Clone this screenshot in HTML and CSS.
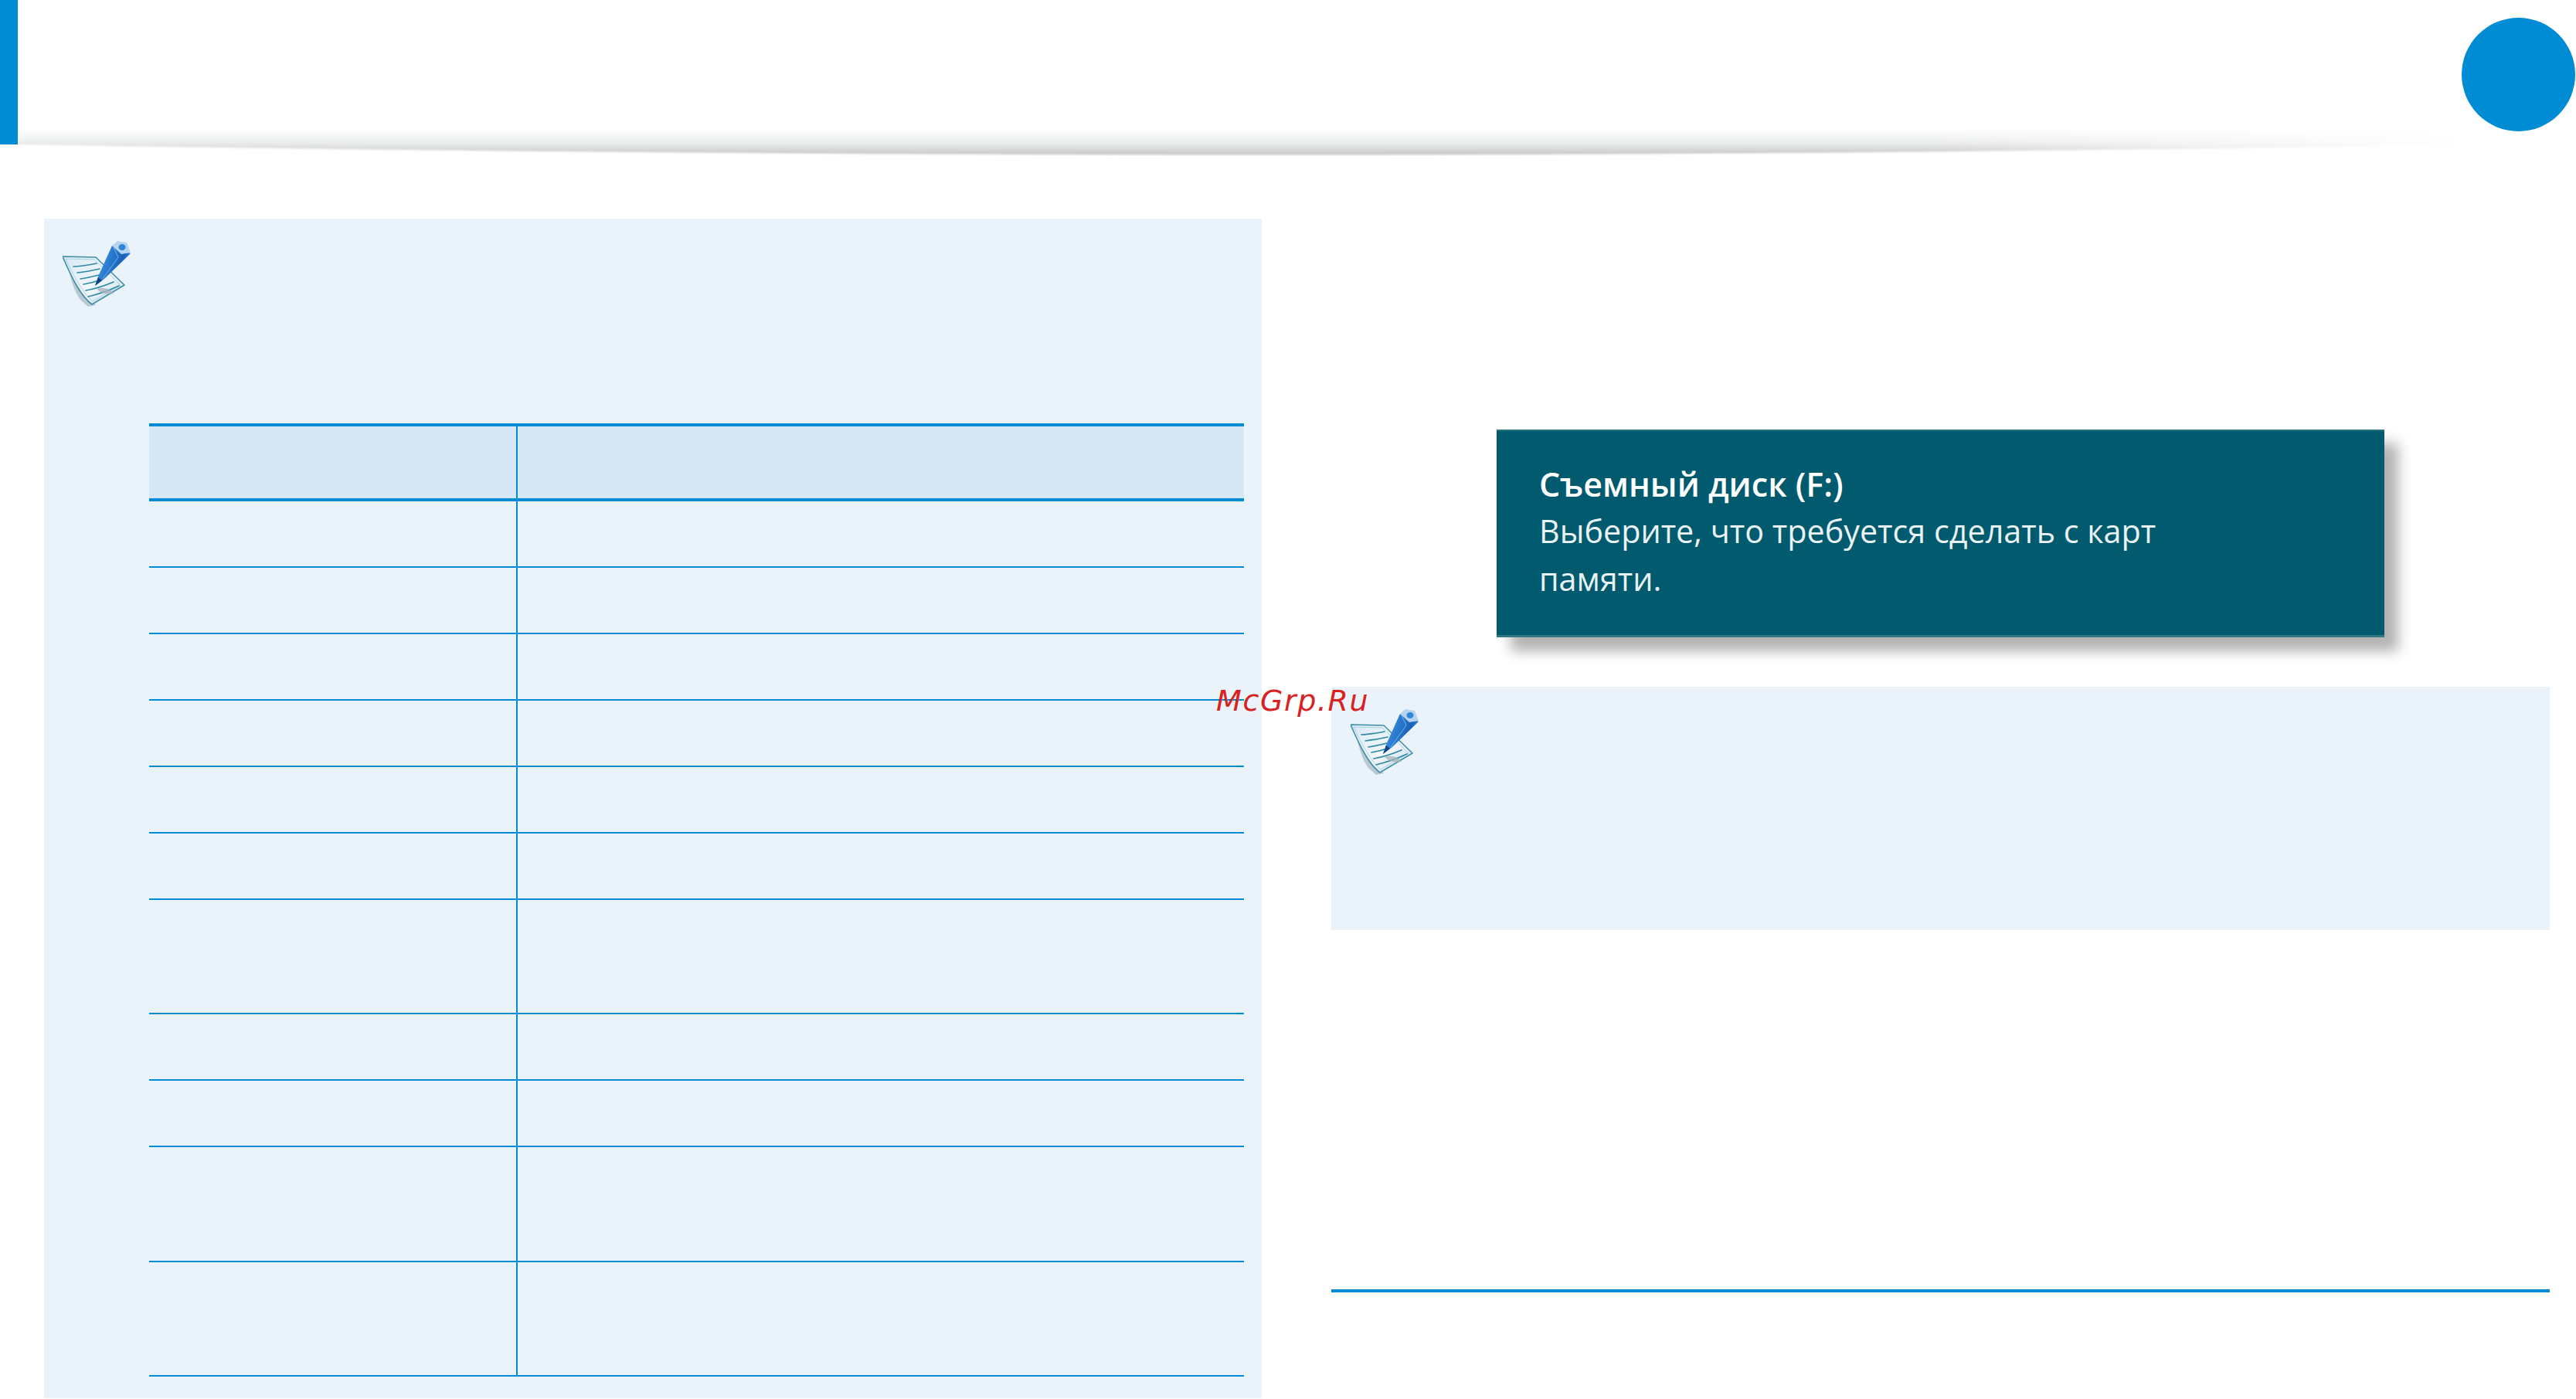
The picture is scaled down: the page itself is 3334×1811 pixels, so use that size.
FILE: index.html
```html
<!DOCTYPE html>
<html lang="ru">
<head>
<meta charset="utf-8">
<title>Съемный диск</title>
<link rel="stylesheet" href="styles.css">
</head>
<body>
<svg class="defs" width="0" height="0" aria-hidden="true">
  <defs>
    <linearGradient id="paper" x1="0" y1="0" x2="1" y2="1">
      <stop offset="0" stop-color="#d9e8f4"/>
      <stop offset="0.55" stop-color="#f1f7fb"/>
      <stop offset="1" stop-color="#c9dbe6"/>
    </linearGradient>
    <linearGradient id="pencil" x1="0" y1="0" x2="1" y2="0.35">
      <stop offset="0" stop-color="#5aa3e8"/>
      <stop offset="0.45" stop-color="#2a7dd2"/>
      <stop offset="0.8" stop-color="#1a62b8"/>
      <stop offset="1" stop-color="#3a88d8"/>
    </linearGradient>
    <symbol id="note" viewBox="0 0 90 88">
      <path d="M5 26C10 46 14 64 23 76L33 85L43 83L38 78Z" fill="#b9c8d2"/>
      <path d="M0 20L43 21L80 57L38 82C24 72 12 48 0 20Z" fill="url(#paper)" stroke="#3f8ea6" stroke-width="1.6" stroke-linejoin="round"/>
      <path d="M4 23L41 24L75 57L39 78C27 68 15 47 4 23Z" fill="none" stroke="#a9d4e2" stroke-width="1"/>
      <g fill="none" stroke="#2d89a4" stroke-width="1.7" stroke-linecap="round">
        <path d="M14 33C24 33 34 31 44 29"/>
        <path d="M19 41C29 40 39 38 48 36"/>
        <path d="M23 49C31 48 39 46 47 44"/>
        <path d="M27 56C32 55 38 54 44 52"/>
        <path d="M30 64C42 62 54 58 66 53"/>
        <path d="M33 72C46 69 60 64 73 58"/>
      </g>
      <path d="M44 62C52 59 62 62 66 68C58 70 50 68 44 62Z" fill="#a8b2b8" opacity="0.75"/>
      <path d="M42 58L46 46L64 6L88 16L54 49Z" fill="url(#pencil)"/>
      <path d="M66 8L72 21L52 49" fill="none" stroke="#8fc4f0" stroke-width="1.2" opacity="0.6"/>
      <path d="M42 58L46 47L51 51Z" fill="#12427f"/>
      <path d="M64 6L71 0L83 2L88 15L76 17Z" fill="#b7d4ee"/>
      <ellipse cx="77" cy="8" rx="4.5" ry="4" fill="#2f86d8"/>
    </symbol>
  </defs>
</svg>

<header class="top">
  <div class="tab"></div>
  <div class="fade"></div>
  <div class="dot"></div>
</header>

<main class="page">
  <section class="note note-tall">
    <svg class="note-icon" aria-hidden="true"><use href="#note"/></svg>
    <table class="spec">
      <thead>
        <tr><th></th><th></th></tr>
      </thead>
      <tbody>
        <tr><td></td><td></td></tr>
        <tr><td></td><td></td></tr>
        <tr><td></td><td></td></tr>
        <tr><td></td><td></td></tr>
        <tr><td></td><td></td></tr>
        <tr><td></td><td></td></tr>
        <tr class="tall"><td></td><td></td></tr>
        <tr><td></td><td></td></tr>
        <tr><td></td><td></td></tr>
        <tr class="taller"><td></td><td></td></tr>
        <tr class="tall"><td></td><td></td></tr>
      </tbody>
    </table>
  </section>

  <section class="side">
    <div class="toast">
      <p class="toast-title">Съемный диск (F:)</p>
      <p class="toast-text">Выберите, что требуется сделать с карт памяти.</p>
    </div>
    <div class="note note-short">
      <svg class="note-icon" aria-hidden="true"><use href="#note"/></svg>
    </div>
    <div class="rule"></div>
  </section>
</main>

<div class="mark">McGrp.Ru</div>
</body>
</html>
```
FILE: styles.css
```css
* { box-sizing: border-box; }

html, body {
  margin: 0;
  padding: 0;
  background: #fff;
}

body {
  position: relative;
  width: 3334px;
  height: 1811px;
  overflow: hidden;
  font-family: "Open Sans", "Noto Sans", sans-serif;
}

.defs { position: absolute; }

.top {
  position: relative;
  display: flex;
  justify-content: space-between;
  align-items: flex-start;
  height: 187px;
}

.tab {
  position: relative;
  z-index: 1;
  width: 23px;
  height: 187px;
  background: #008bd5;
}

.dot {
  width: 147px;
  height: 147px;
  margin: 23px 1px 0 0;
  border-radius: 50%;
  background: #008bd5;
}

.fade {
  position: absolute;
  top: 165px;
  left: 23px;
  width: 3180px;
  height: 40px;
  filter: blur(1.2px);
  -webkit-mask-image: linear-gradient(90deg, #000 0, #000 78%, transparent 100%);
  mask-image: linear-gradient(90deg, #000 0, #000 78%, transparent 100%);
}

.fade::before {
  content: "";
  display: block;
  height: 100%;
  background: linear-gradient(180deg, #fff 0, #f8f9f9 20%, #ebedec 50%, #d6d8d7 72%, #c7c9c8 88%, #c7c9c8 100%);
  clip-path: path("M0 0H3180V22Q1640 49 0 22Z");
}

.page {
  display: flex;
  align-items: flex-start;
}

.note { background: #eaf3fa; }

.note-icon {
  display: block;
  width: 90px;
  height: 88px;
}

.note-tall {
  width: 1576px;
  height: 1527px;
  margin: 96px 0 0 57px;
  padding: 29px 23px 0 24px;
}

.spec {
  width: 1417px;
  margin: 148px 0 0 112px;
  border-collapse: separate;
  border-spacing: 0;
  table-layout: fixed;
}

.spec th,
.spec td {
  padding: 0;
  border-bottom: 2px solid #008bd5;
}

.spec th:first-child,
.spec td:first-child {
  width: 477px;
  border-right: 2px solid #008bd5;
}

.spec th {
  height: 101px;
  background: #d6e7f5;
  border-top: 4px solid #008bd5;
  border-bottom-width: 4px;
}

.spec td { height: 86px; }
.spec .tall td { height: 148px; }
.spec .taller td { height: 149px; }

.side {
  width: 1577px;
  margin-left: 90px;
}

.toast {
  width: 1149px;
  height: 269px;
  margin: 369px 0 0 214px;
  padding: 40px 270px 0 55px;
  color: #e9f2f4;
  background: #015a6d;
  border-top: 2px solid #2a7482;
  border-bottom: 3px solid #2f7986;
  box-shadow: 18px 18px 16px rgba(0, 0, 0, 0.3);
}

.toast p { margin: 0; }

.toast-title {
  font-size: 43px;
  line-height: 58px;
  font-weight: 600;
  color: #fff;
}

.toast-text {
  font-size: 41.3px;
  line-height: 62px;
}

.note-short {
  height: 315px;
  margin-top: 64px;
  padding: 29px 25px 0;
}

.rule {
  height: 4px;
  margin-top: 465px;
  background: #008bd5;
}

.mark {
  position: absolute;
  left: 1574px;
  top: 877px;
  font-family: "DejaVu Sans", sans-serif;
  font-style: italic;
  font-size: 38px;
  line-height: 60px;
  letter-spacing: 1.6px;
  color: #d9221f;
  white-space: nowrap;
}
```
